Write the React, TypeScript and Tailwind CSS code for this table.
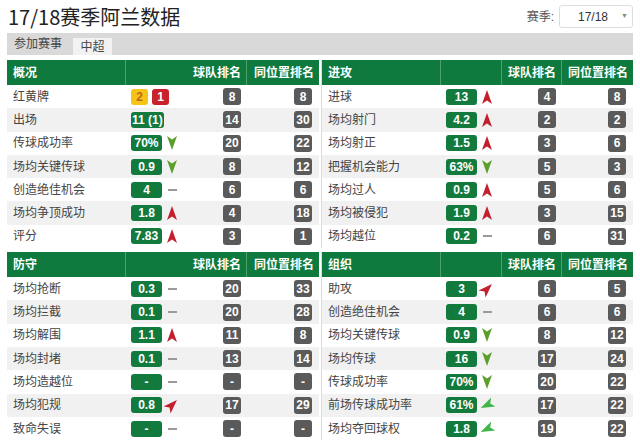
type Trend = "up" | "down" | "flat" | "ur" | "dl" | null;
type Row = { label: string; value: string | { y: string; r: string }; trend: Trend; team: string; pos: string };
type Section = { title: string; rows: Row[] };

const r = (label: string, value: Row["value"], trend: Trend, team: string, pos: string): Row => ({ label, value, trend, team, pos });

const top: Section[] = [
  {
    title: "概况",
    rows: [
      r("红黄牌", { y: "2", r: "1" }, null, "8", "8"),
      r("出场", "11 (1)", null, "14", "30"),
      r("传球成功率", "70%", "down", "20", "22"),
      r("场均关键传球", "0.9", "down", "8", "12"),
      r("创造绝佳机会", "4", "flat", "6", "6"),
      r("场均争顶成功", "1.8", "up", "4", "18"),
      r("评分", "7.83", "up", "3", "1"),
    ],
  },
  {
    title: "进攻",
    rows: [
      r("进球", "13", "up", "4", "8"),
      r("场均射门", "4.2", "up", "2", "2"),
      r("场均射正", "1.5", "up", "3", "6"),
      r("把握机会能力", "63%", "down", "5", "3"),
      r("场均过人", "0.9", "up", "5", "6"),
      r("场均被侵犯", "1.9", "up", "3", "15"),
      r("场均越位", "0.2", "flat", "6", "31"),
    ],
  },
];

const bottom: Section[] = [
  {
    title: "防守",
    rows: [
      r("场均抢断", "0.3", "flat", "20", "33"),
      r("场均拦截", "0.1", "flat", "20", "28"),
      r("场均解围", "1.1", "up", "11", "8"),
      r("场均封堵", "0.1", "flat", "13", "14"),
      r("场均造越位", "-", "flat", "-", "-"),
      r("场均犯规", "0.8", "ur", "17", "29"),
      r("致命失误", "-", "flat", "-", "-"),
    ],
  },
  {
    title: "组织",
    rows: [
      r("助攻", "3", "ur", "6", "5"),
      r("创造绝佳机会", "4", "flat", "6", "6"),
      r("场均关键传球", "0.9", "down", "8", "12"),
      r("场均传球", "16", "down", "17", "24"),
      r("传球成功率", "70%", "down", "20", "22"),
      r("前场传球成功率", "61%", "dl", "17", "22"),
      r("场均夺回球权", "1.8", "dl", "19", "22"),
    ],
  },
];

function TrendIcon({ t }: { t: Trend }) {
  if (!t) return null;
  if (t === "flat") return <span className="ml-[6px] block h-[2px] w-[9px] bg-[#9a9a9a]" />;
  const up = t === "up" || t === "ur";
  const color = up ? "#c3202e" : t === "down" ? "#5a9e2c" : "#3fb54a";
  const rot = t === "ur" ? "rotate-45" : t === "dl" ? "rotate-[65deg]" : "";
  return (
    <svg width="10" height="14" viewBox="0 0 10 14" className={`ml-[5px] ${rot}`}>
      {up ? <polygon points="5,0 10,14 5,10.5 0,14" fill={color} /> : <polygon points="0,0 5,3.5 10,0 5,14" fill={color} />}
    </svg>
  );
}

function Table({ s, right }: { s: Section; right?: boolean }) {
  return (
    <div className={right ? "border-l border-[#cfe3d6]" : ""}>
      <div className="grid h-[25px] grid-cols-[119px_61px_60px_1fr] bg-[#0f7a3d] text-[12px] font-bold text-white">
        <div className="flex items-center border-r border-[#4f9f6d] pl-[6px]">{s.title}</div>
        <div className={right ? "border-r border-[#4f9f6d]" : ""} />
        <div className="flex items-center justify-end whitespace-nowrap border-r border-[#4f9f6d] pr-[5px]">球队排名</div>
        <div className="flex items-center justify-end whitespace-nowrap pr-[5px]">同位置排名</div>
      </div>
      {s.rows.map((row, i) => (
        <div key={i} className={`grid h-[23.3px] grid-cols-[119px_61px_60px_1fr] ${i % 2 ? "bg-[#f1f1f1]" : "bg-white"}`}>
          <div className="flex items-center pl-[6px] text-[12px] text-[#444]">{row.label}</div>
          <div className="flex items-center pl-[5px]">
            {typeof row.value === "string" ? (
              <span className="flex h-[16px] min-w-[31px] items-center justify-center whitespace-nowrap rounded-[3px] bg-[#137a3e] px-[1px] text-[12px] font-bold text-white">
                {row.value}
              </span>
            ) : (
              <>
                <span className="flex h-[16px] w-[17px] items-center justify-center rounded-[3px] bg-[#f6c417] text-[12px] font-bold text-[#c0661c]">{row.value.y}</span>
                <span className="ml-[4px] flex h-[16px] w-[17px] items-center justify-center rounded-[3px] bg-[#c8232c] text-[12px] font-bold text-white">{row.value.r}</span>
              </>
            )}
            <TrendIcon t={row.trend} />
          </div>
          <div className="flex items-center justify-end pr-[6px]">
            <span className="flex h-[17px] min-w-[18px] items-center justify-center rounded-[3px] bg-[#5a5a5a] px-[2px] text-[12px] font-bold text-white">{row.team}</span>
          </div>
          <div className="flex items-center justify-end pr-[7px]">
            <span className="flex h-[17px] min-w-[18px] items-center justify-center rounded-[3px] bg-[#5a5a5a] px-[2px] text-[12px] font-bold text-white">{row.pos}</span>
          </div>
        </div>
      ))}
    </div>
  );
}

export default function App() {
  return (
    <div className="h-[444px] w-[640px] overflow-hidden bg-white px-[7px] font-['Liberation_Sans','Noto_Sans_CJK_SC',sans-serif]">
      <div className="flex h-[33px] items-center justify-between">
        <h1 className="pl-[1px] font-['Noto_Sans_CJK_SC',sans-serif] text-[20px] leading-none text-[#222]">17/18赛季阿兰数据</h1>
        <div className="flex items-center">
          <span className="text-[12px] text-[#555]">赛季:</span>
          <div className="ml-[5px] flex h-[23px] w-[74px] items-center rounded-[3px] border border-[#ddd] bg-white pl-[18px] pr-[4px] text-[12px] text-[#333]">
            <span className="flex-1">17/18</span>
            <span className="text-[7px] text-[#888]">▼</span>
          </div>
        </div>
      </div>
      <div className="flex h-[22px] items-center bg-[#d9d9d9] pl-[7px] text-[12px] text-[#444]">
        <span>参加赛事</span>
        <span className="ml-[11px] flex h-[17px] w-[39px] items-center justify-center self-end bg-[#f2f2f2] text-[12px]">中超</span>
      </div>
      <div className="mt-[5px] grid grid-cols-2 gap-x-[2px]">
        <Table s={top[0]} />
        <Table s={top[1]} right />
      </div>
      <div className="mt-[4px] grid grid-cols-2 gap-x-[2px]">
        <Table s={bottom[0]} />
        <Table s={bottom[1]} right />
      </div>
    </div>
  );
}
